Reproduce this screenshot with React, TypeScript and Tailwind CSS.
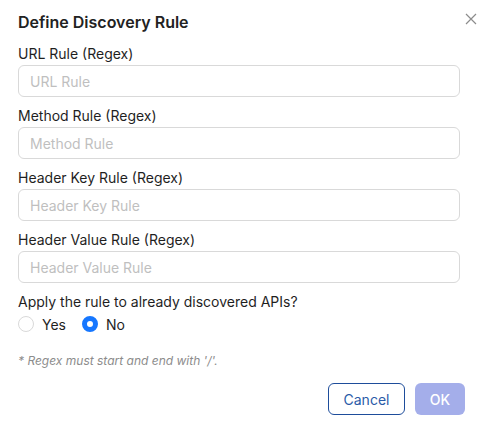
import React from "react";

const fields = [
  { label: "URL Rule (Regex)", placeholder: "URL Rule" },
  { label: "Method Rule (Regex)", placeholder: "Method Rule" },
  { label: "Header Key Rule (Regex)", placeholder: "Header Key Rule" },
  { label: "Header Value Rule (Regex)", placeholder: "Header Value Rule" },
];

export default function App() {
  return (
    <div
      className="relative w-[487px] h-[424px] bg-white pl-[18px] pr-[27px] pt-[10px] text-[#1f1f1f]"
      style={{ fontFamily: "Inter, 'Noto Sans', sans-serif" }}
    >
      {/* Close */}
      <button className="absolute right-[10px] top-[13px] w-[12px] h-[12px] text-[#8c8c8c]">
        <svg viewBox="0 0 12 12" className="w-[12px] h-[12px]" fill="none" stroke="currentColor" strokeWidth="1.2">
          <path d="M1 1L11 11M11 1L1 11" />
        </svg>
      </button>

      <h2 className="text-[16px] leading-[24px] font-semibold text-[#222] mb-[9px]">
        Define Discovery Rule
      </h2>

      {fields.map((f) => (
        <div key={f.label} className="mb-[8px]">
          <div className="text-[14px] leading-[22px]">{f.label}</div>
          <input
            placeholder={f.placeholder}
            className="w-full h-[32px] rounded-[6px] border border-[#d9d9d9] px-[11px] text-[14px] outline-none placeholder:text-[#bfbfbf]"
          />
        </div>
      ))}

      <div className="text-[14px] leading-[22px]">Apply the rule to already discovered APIs?</div>
      <div className="flex items-center h-[22px] text-[14px]">
        <label className="flex items-center gap-[8px] mr-[16px]">
          <span className="w-[16px] h-[16px] rounded-full border border-[#d9d9d9] bg-white" />
          <span>Yes</span>
        </label>
        <label className="flex items-center gap-[8px]">
          <span className="w-[16px] h-[16px] rounded-full border-[5px] border-[#1677ff] bg-white" />
          <span>No</span>
        </label>
      </div>

      <p className="mt-[17px] text-[12px] leading-[18px] italic text-[#8c8c8c]">
        * Regex must start and end with '/'.
      </p>

      <div className="mt-[13px] flex justify-end gap-[10px] pr-[-5px] mr-[-5px]">
        <button className="h-[32px] w-[77px] rounded-[6px] border border-[#1e4d9b] text-[14px] text-[#2a5ba8] bg-white">
          Cancel
        </button>
        <button className="h-[32px] w-[50px] rounded-[6px] bg-[#a4aeea] text-[14px] font-medium text-white">
          OK
        </button>
      </div>
    </div>
  );
}
